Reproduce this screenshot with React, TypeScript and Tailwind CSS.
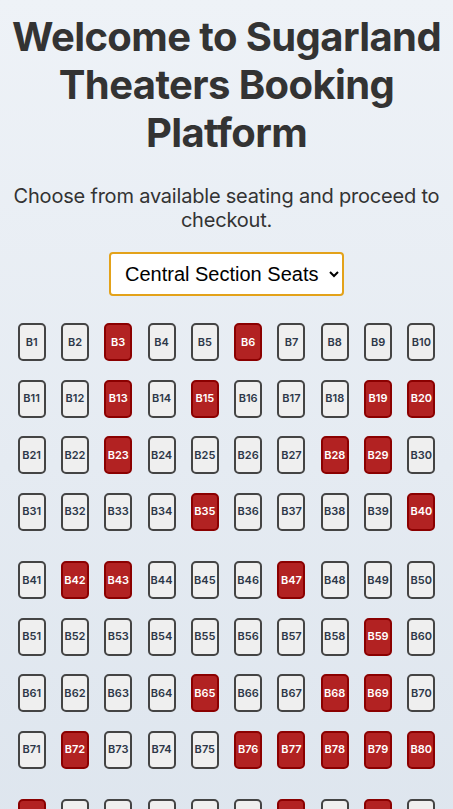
import { useState } from 'react';

const TAKEN = new Set([
  3, 6, 13, 15, 19, 20, 23, 28, 29, 35, 40, 42, 43, 47, 59, 65, 68, 69, 72, 76, 77, 78, 79, 80, 81, 87, 89,
]);

const ROWS = 10;
const PER_ROW = 10;

function Seat({ num }: { num: number }) {
  const taken = TAKEN.has(num);
  return (
    <button
      className={`w-[28px] h-[38px] rounded-[5px] border-2 flex items-center justify-center text-[11px] font-semibold leading-none ${
        taken ? 'bg-[#b22222] border-[#8b0000] text-white' : 'bg-[#efefef] border-[#444444] text-[#2d3748]'
      }`}
    >
      B{num}
    </button>
  );
}

export default function App() {
  const [section, setSection] = useState('central');

  // rows come in blocks of four, with a wider aisle between blocks
  const rows = Array.from({ length: ROWS }, (_, r) => r);
  const blocks: number[][] = [];
  for (let i = 0; i < rows.length; i += 4) blocks.push(rows.slice(i, i + 4));

  return (
    <div className="min-h-screen bg-gradient-to-b from-[#eef2f7] to-[#dce4ed] font-['Inter',sans-serif] text-[#333333] pb-10">
      <h1 className="pt-[13px] text-center text-[40px] leading-[48px] font-bold tracking-[-0.6px]">
        Welcome to Sugarland Theaters Booking Platform
      </h1>

      <p className="mt-[27px] text-center text-[20px] leading-[24px] tracking-[-0.2px]">
        Choose from available seating and proceed to checkout.
      </p>

      <div className="mt-[20px] flex justify-center">
        <select
          value={section}
          onChange={(e) => setSection(e.target.value)}
          className="w-[235px] h-[44px] bg-white border-2 border-[#e3a21a] rounded-[4px] pl-[10px] pr-1 text-[20px] text-black font-['Liberation_Sans',Arial,sans-serif]"
        >
          <option value="central">Central Section Seats</option>
          <option value="left">Left Section Seats</option>
          <option value="right">Right Section Seats</option>
        </select>
      </div>

      <div className="mt-[27px] px-[10px] flex flex-col gap-y-[30.5px]">
        {blocks.map((block, b) => (
          <div key={b} className="flex flex-col gap-y-[18.5px]">
            {block.map((r) => (
              <div key={r} className="grid grid-cols-10 justify-items-center">
                {Array.from({ length: PER_ROW }, (_, c) => (
                  <Seat key={c} num={r * PER_ROW + c + 1} />
                ))}
              </div>
            ))}
          </div>
        ))}
      </div>
    </div>
  );
}
